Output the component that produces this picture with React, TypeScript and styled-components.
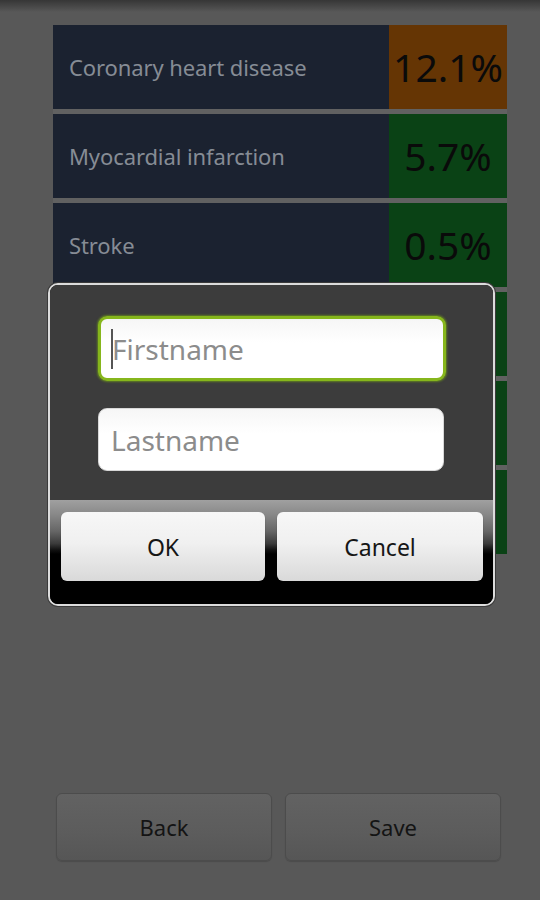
import styled, { createGlobalStyle } from "styled-components";

const GlobalStyle = createGlobalStyle`
  html, body {
    margin: 0;
    padding: 0;
    background: #585858;
  }
  body {
    font-family: "Noto Sans", "Open Sans", sans-serif;
  }
`;

const Page = styled.div`
  position: relative;
  width: 540px;
  height: 900px;
  display: flex;
  flex-direction: column;
  background: #585858;
  overflow: hidden;
`;

const TopShade = styled.div`
  height: 12px;
  flex: none;
  background: linear-gradient(to bottom, #363636 0%, #4a4a4a 60%, #585858 100%);
`;

const Table = styled.div`
  margin: 13px 0 0 53px;
  width: 454px;
  display: flex;
  flex-direction: column;
  gap: 5px;
  background: #616161;
`;

const Row = styled.div`
  display: grid;
  grid-template-columns: 336px 118px;
  height: 84px;
`;

const Label = styled.div`
  display: flex;
  align-items: center;
  padding-left: 16px;
  background: #1b2230;
  color: #868c95;
  font-size: 22px;
  letter-spacing: -0.1px;
`;

const Value = styled.div<{ $tone: "high" | "low" }>`
  display: flex;
  align-items: center;
  justify-content: center;
  background: ${({ $tone }) => ($tone === "high" ? "#653504" : "#0a4215")};
  color: #0a0a0a;
  font-size: 39px;
  padding-bottom: 2px;
`;

const Spacer = styled.div`
  flex: 1;
`;

const Footer = styled.div`
  display: grid;
  grid-template-columns: 216px 216px;
  gap: 13px;
  margin: 0 0 39px 56px;
`;

const FooterButton = styled.div`
  height: 68px;
  border-radius: 6px;
  border: 1px solid #4c4c4c;
  background: linear-gradient(to bottom, #626262 0%, #5c5c5c 60%, #565656 100%);
  box-shadow: 0 1px 1px rgba(0, 0, 0, 0.15);
  display: flex;
  align-items: center;
  justify-content: center;
  color: #141414;
  font-size: 22px;
  box-sizing: border-box;
`;

const Dialog = styled.div`
  position: absolute;
  left: 48px;
  top: 283px;
  width: 447px;
  height: 323px;
  box-sizing: border-box;
  border: 2px solid #dcdcdc;
  border-radius: 10px;
  box-shadow: 0 0 0 1px #3a3a3a;
  overflow: hidden;
  display: flex;
  flex-direction: column;
  background: #000;
`;

const DialogBody = styled.div`
  height: 215px;
  box-sizing: border-box;
  background: #3c3c3c;
  padding: 31px 47px 0 48px;
  display: flex;
  flex-direction: column;
  gap: 27px;
`;

const Field = styled.div<{ $focused?: boolean }>`
  height: ${({ $focused }) => ($focused ? 65 : 63)}px;
  box-sizing: border-box;
  border-radius: 9px;
  background: linear-gradient(to bottom, #f6f6f6 0%, #ffffff 40%, #ffffff 100%);
  border: ${({ $focused }) => ($focused ? "3px solid #86b61c" : "1px solid #d8d8d8")};
  box-shadow: ${({ $focused }) =>
    $focused ? "0 0 2px 1px rgba(120, 170, 20, 0.6)" : "none"};
  display: flex;
  align-items: center;
  padding-left: ${({ $focused }) => ($focused ? 10 : 12)}px;
  margin-right: ${({ $focused }) => ($focused ? 0 : 2)}px;
  color: #8c8c8c;
  font-size: 28px;
`;

const Caret = styled.span`
  display: inline-block;
  width: 2px;
  height: 40px;
  background: #555;
  margin-right: -1px;
`;

const ButtonBar = styled.div`
  flex: 1;
  display: grid;
  grid-template-columns: 204px 206px;
  gap: 12px;
  padding: 12px 10px 0 11px;
  align-items: start;
  background: linear-gradient(
    to bottom,
    #a0a0a0 0%,
    #888 14%,
    #666 30%,
    #3a3a3a 42%,
    #111 48%,
    #000 52%,
    #000 100%
  );
`;

const DialogButton = styled.div`
  height: 69px;
  border-radius: 6px;
  background: linear-gradient(to bottom, #f7f7f7 0%, #f0f0f0 45%, #d9d9d9 100%);
  box-shadow: 0 1px 1px rgba(0, 0, 0, 0.5);
  display: flex;
  align-items: center;
  justify-content: center;
  color: #161616;
  font-size: 23px;
`;

const rows: { label: string; value: string; tone: "high" | "low" }[] = [
  { label: "Coronary heart disease", value: "12.1%", tone: "high" },
  { label: "Myocardial infarction", value: "5.7%", tone: "low" },
  { label: "Stroke", value: "0.5%", tone: "low" },
  { label: "", value: "", tone: "low" },
  { label: "", value: "", tone: "low" },
  { label: "", value: "", tone: "low" },
];

export default function App() {
  return (
    <Page>
      <GlobalStyle />
      <TopShade />
      <Table>
        {rows.map((r, i) => (
          <Row key={i}>
            <Label>{r.label}</Label>
            <Value $tone={r.tone}>{r.value}</Value>
          </Row>
        ))}
      </Table>
      <Spacer />
      <Footer>
        <FooterButton>Back</FooterButton>
        <FooterButton>Save</FooterButton>
      </Footer>

      <Dialog>
        <DialogBody>
          <Field $focused>
            <Caret />
            Firstname
          </Field>
          <Field>Lastname</Field>
        </DialogBody>
        <ButtonBar>
          <DialogButton>OK</DialogButton>
          <DialogButton>Cancel</DialogButton>
        </ButtonBar>
      </Dialog>
    </Page>
  );
}
